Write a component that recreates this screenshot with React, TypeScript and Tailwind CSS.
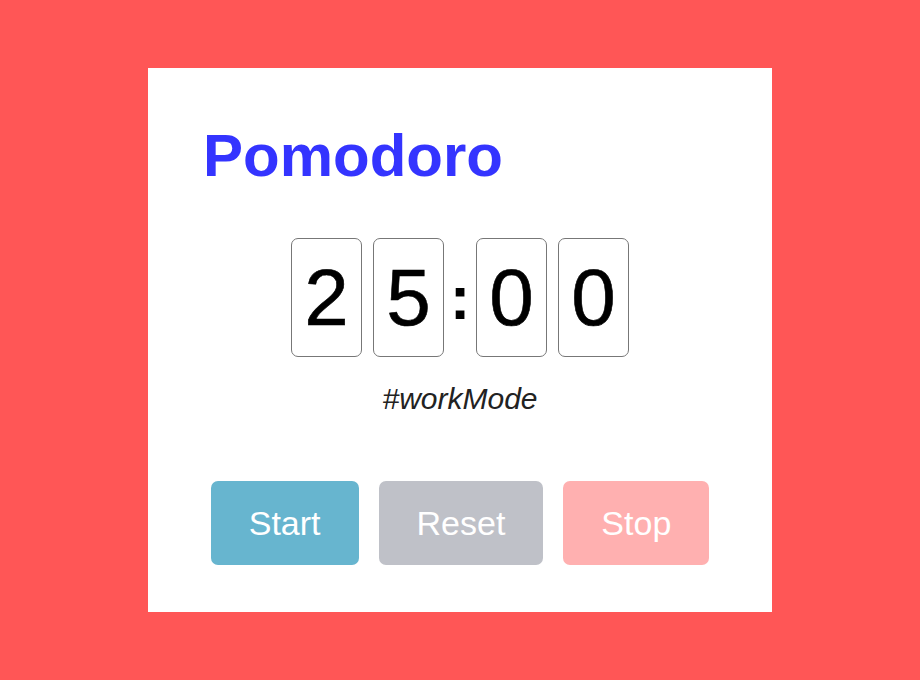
export default function App() {
  const digits = ["2", "5", ":", "0", "0"];
  return (
    <div className="flex h-[680px] w-[920px] items-center justify-center bg-[#ff5656] font-['Liberation_Sans',Arial,sans-serif]">
      <div className="flex h-[544px] w-[624px] flex-col bg-white">
        {/* Title */}
        <h1 className="ml-[55px] mt-[52px] text-[60px] font-bold leading-[72px] text-[#3434ff]">Pomodoro</h1>

        {/* Timer */}
        <div className="mt-[46px] flex items-center justify-center gap-[11px]">
          {digits.map((d, i) =>
            d === ":" ? (
              <span key={i} className="flex w-[10px] justify-center text-[62px] font-bold leading-none text-black">:</span>
            ) : (
              <div
                key={i}
                className="flex h-[119px] w-[71px] items-center justify-center rounded-[7px] border border-[#777] text-[80px] leading-none text-black [-webkit-text-stroke:0.6px_black]"
              >
                {d}
              </div>
            )
          )}
        </div>
        <p className="mt-[27px] text-center text-[30px] italic leading-none text-[#222]">#workMode</p>

        {/* Buttons */}
        <div className="mt-[67px] flex justify-center gap-[20px]">
          <button className="h-[84px] rounded-[7px] bg-[#67b5cf] px-[38px] text-[34px] text-white">Start</button>
          <button className="h-[84px] rounded-[7px] bg-[#bfc1c8] px-[38px] text-[34px] text-white">Reset</button>
          <button className="h-[84px] rounded-[7px] bg-[#ffb0b0] px-[38px] text-[34px] text-white">Stop</button>
        </div>
      </div>
    </div>
  );
}
